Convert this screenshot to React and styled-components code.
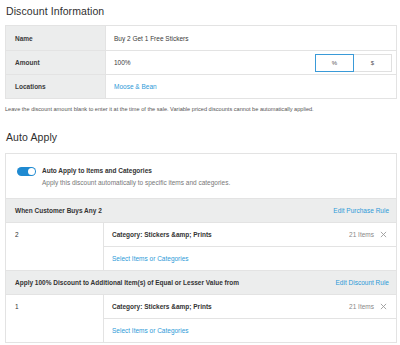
import React from 'react';
import styled, { createGlobalStyle } from 'styled-components';

const GlobalStyle = createGlobalStyle`
  body {
    margin: 0;
    background: #ffffff;
    font-family: "Liberation Sans", Arial, sans-serif;
    color: #3b3b3b;
  }
`;

const Page = styled.div`
  width: 400px;
  height: 345px;
  box-sizing: border-box;
  padding: 4px 3px 0 5px;
  overflow: hidden;
`;

const Heading = styled.h2`
  margin: 0 0 0 1px;
  font-size: 10.5px;
  font-weight: 500;
  line-height: 15px;
  color: #2f2f2f;
  letter-spacing: 0.1px;
`;

const InfoTable = styled.div`
  margin-top: 6px;
  border: 1px solid #e3e3e3;
  display: grid;
  grid-template-columns: 99px 1fr;
`;

const Label = styled.div`
  height: 24px;
  box-sizing: border-box;
  background: #eceded;
  display: flex;
  align-items: center;
  padding-left: 9px;
  font-size: 6.5px;
  font-weight: 600;
  color: #3a3a3a;
  border-top: ${p => (p.first ? 'none' : '1px solid #e3e3e3')};
`;

const Value = styled.div`
  height: 24px;
  box-sizing: border-box;
  display: flex;
  align-items: center;
  justify-content: space-between;
  padding-left: 8px;
  padding-right: 4px;
  font-size: 6.5px;
  color: ${p => (p.link ? '#2d9ad8' : '#3a3a3a')};
  border-top: ${p => (p.first ? 'none' : '1px solid #e3e3e3')};
  border-left: 1px solid #e3e3e3;
`;

const Segment = styled.div`
  display: flex;
`;

const SegButton = styled.div`
  width: 39px;
  height: 18px;
  box-sizing: border-box;
  display: flex;
  align-items: center;
  justify-content: center;
  font-size: 6px;
  color: #555;
  border: 1px solid ${p => (p.active ? '#3a9ad8' : '#e0e0e0')};
  margin-left: ${p => (p.active ? '0' : '-1px')};
  position: relative;
  z-index: ${p => (p.active ? 1 : 0)};
`;

const Note = styled.p`
  margin: 6px 0 0 0;
  font-size: 5.6px;
  color: #555;
  line-height: 8px;
`;

const AutoHeading = styled(Heading)`
  margin-top: 17px;
`;

const Panel = styled.div`
  margin-top: 8px;
  border: 1px solid #e3e3e3;
`;

const ToggleRow = styled.div`
  height: 44px;
  display: flex;
  align-items: flex-start;
  padding: 12px 0 0 11px;
  box-sizing: border-box;
`;

const Toggle = styled.div`
  width: 19px;
  height: 9px;
  border-radius: 5px;
  background: #1f8ad1;
  position: relative;
  margin-top: 1px;
  flex-shrink: 0;

  &::after {
    content: '';
    position: absolute;
    right: 1px;
    top: 1px;
    width: 7px;
    height: 7px;
    border-radius: 50%;
    background: #fff;
  }
`;

const ToggleText = styled.div`
  margin-left: 6px;
`;

const ToggleTitle = styled.div`
  font-size: 6.5px;
  font-weight: 600;
  color: #333;
  line-height: 9px;
`;

const ToggleSub = styled.div`
  font-size: 6.5px;
  color: #777;
  line-height: 9px;
  margin-top: 3px;
`;

const RuleHeader = styled.div`
  height: 24px;
  background: #eceded;
  display: flex;
  align-items: center;
  justify-content: space-between;
  padding: 0 7px 0 9px;
  font-size: 6.5px;
  font-weight: 600;
  color: #333;
  border-top: 1px solid #e3e3e3;
  box-sizing: border-box;
`;

const LinkText = styled.span`
  color: #2d9ad8;
  font-weight: 500;
`;

const RuleBody = styled.div`
  display: grid;
  grid-template-columns: 98px 1fr;
  grid-template-rows: 23px 24px;
  border-top: 1px solid #e3e3e3;
`;

const Qty = styled.div`
  grid-row: span 2;
  padding: 8px 0 0 9px;
  font-size: 6.5px;
  color: #333;
  border-right: 1px solid #e3e3e3;
`;

const Cell = styled.div`
  display: flex;
  align-items: center;
  justify-content: space-between;
  padding: 0 9px 0 8px;
  font-size: 6.5px;
  font-weight: ${p => (p.bold ? 600 : 400)};
  color: ${p => (p.link ? '#2d9ad8' : '#333')};
  border-top: ${p => (p.divider ? '1px solid #e3e3e3' : 'none')};
`;

const Count = styled.div`
  display: flex;
  align-items: center;
  gap: 6px;
  font-weight: 400;
  color: #888;
`;

const Close = () => (
  <svg width="7" height="7" viewBox="0 0 8 8">
    <path d="M1 1 L7 7 M7 1 L1 7" stroke="#999" strokeWidth="1" />
  </svg>
);

const rules = [
  { title: 'When Customer Buys Any 2', edit: 'Edit Purchase Rule', qty: 2 },
  { title: 'Apply 100% Discount to Additional Item(s) of Equal or Lesser Value from', edit: 'Edit Discount Rule', qty: 1 },
];

export default function App() {
  return (
    <Page>
      <GlobalStyle />
      <Heading>Discount Information</Heading>
      <InfoTable>
        <Label first>Name</Label>
        <Value first>Buy 2 Get 1 Free Stickers</Value>
        <Label>Amount</Label>
        <Value>
          <span>100%</span>
          <Segment>
            <SegButton active>%</SegButton>
            <SegButton>$</SegButton>
          </Segment>
        </Value>
        <Label>Locations</Label>
        <Value link>Moose &amp; Bean</Value>
      </InfoTable>
      <Note>
        Leave the discount amount blank to enter it at the time of the sale. Variable priced discounts cannot be automatically applied.
      </Note>
      <AutoHeading>Auto Apply</AutoHeading>
      <Panel>
        <ToggleRow>
          <Toggle />
          <ToggleText>
            <ToggleTitle>Auto Apply to Items and Categories</ToggleTitle>
            <ToggleSub>Apply this discount automatically to specific items and categories.</ToggleSub>
          </ToggleText>
        </ToggleRow>
        {rules.map(rule => (
          <React.Fragment key={rule.edit}>
            <RuleHeader>
              <span>{rule.title}</span>
              <LinkText>{rule.edit}</LinkText>
            </RuleHeader>
            <RuleBody>
              <Qty>{rule.qty}</Qty>
              <Cell bold>
                <span>Category: Stickers &amp;amp; Prints</span>
                <Count>
                  <span>21 Items</span>
                  <Close />
                </Count>
              </Cell>
              <Cell link divider>Select Items or Categories</Cell>
            </RuleBody>
          </React.Fragment>
        ))}
      </Panel>
    </Page>
  );
}
